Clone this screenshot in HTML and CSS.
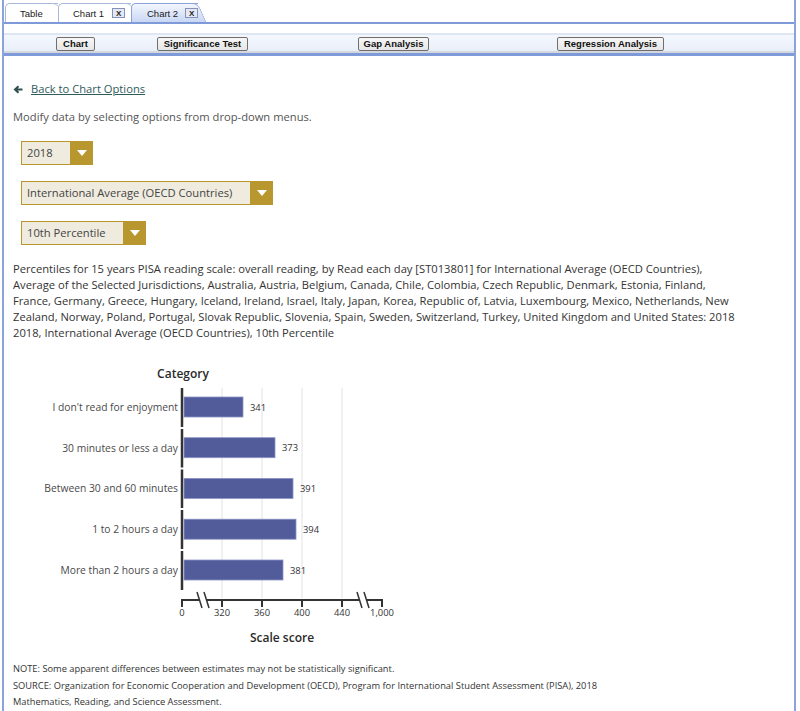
FILE: index.html
```html
<!DOCTYPE html>
<html lang="en">
<head>
<meta charset="utf-8">
<title>Chart 2</title>
<link rel="stylesheet" href="styles.css">
</head>
<body>
<div class="frame">
  <div class="tabs">
    <div class="tab tab-table"><span class="tab-label">Table</span></div>
    <div class="tab tab-c1"><span class="tab-label">Chart 1</span><span class="tab-x">X</span></div>
    <div class="tab tab-c2 active"><span class="tab-label">Chart 2</span><span class="tab-x">X</span></div>
  </div>
  <div class="spacer"></div>
  <div class="toolbar">
    <button class="btn b-chart">Chart</button>
    <button class="btn b-sig">Significance Test</button>
    <button class="btn b-gap">Gap Analysis</button>
    <button class="btn b-reg">Regression Analysis</button>
  </div>
  <div class="content">
    <div class="back">
      <svg class="back-icon" width="10" height="9" viewBox="0 0 10 9"><path d="M9.5 4.5H2.5M5.5 1.2L2 4.5L5.5 7.8" fill="none" stroke="#2f4f4f" stroke-width="2"/></svg>
      <a href="#" class="back-link">Back to Chart Options</a>
    </div>
    <p class="lead">Modify data by selecting options from drop-down menus.</p>
    <div class="dd dd-year"><span class="dd-text">2018</span><span class="dd-arrow"><i class="tri"></i></span></div>
    <div class="dd dd-jur"><span class="dd-text">International Average (OECD Countries)</span><span class="dd-arrow"><i class="tri"></i></span></div>
    <div class="dd dd-pct"><span class="dd-text">10th Percentile</span><span class="dd-arrow"><i class="tri"></i></span></div>
    <p class="desc">Percentiles for 15 years PISA reading scale: overall reading, by Read each day [ST013801] for International Average (OECD Countries), Average of the Selected Jurisdictions, Australia, Austria, Belgium, Canada, Chile, Colombia, Czech Republic, Denmark, Estonia, Finland, France, Germany, Greece, Hungary, Iceland, Ireland, Israel, Italy, Japan, Korea, Republic of, Latvia, Luxembourg, Mexico, Netherlands, New Zealand, Norway, Poland, Portugal, Slovak Republic, Slovenia, Spain, Sweden, Switzerland, Turkey, United Kingdom and United States: 2018 2018, International Average (OECD Countries), 10th Percentile</p>
    <svg class="chart" width="420" height="300" viewBox="13 352 420 300">
      <text x="183" y="377.5" class="c-title" text-anchor="middle">Category</text>
      <g class="grid">
        <line x1="222" y1="388" x2="222" y2="598"/>
        <line x1="262" y1="388" x2="262" y2="598"/>
        <line x1="302" y1="388" x2="302" y2="598"/>
        <line x1="342" y1="388" x2="342" y2="598"/>
      </g>
      <g class="yaxis">
        <line x1="182" y1="388" x2="182" y2="427"/>
        <line x1="182" y1="429" x2="182" y2="467.5"/>
        <line x1="182" y1="469.5" x2="182" y2="508"/>
        <line x1="182" y1="510" x2="182" y2="549"/>
        <line x1="182" y1="551" x2="182" y2="590"/>
      </g>
      <g class="bars">
        <rect x="184" y="397" width="59" height="20"/>
        <rect x="184" y="437.7" width="91" height="20"/>
        <rect x="184" y="478.4" width="109" height="20"/>
        <rect x="184" y="519.2" width="112" height="20"/>
        <rect x="184" y="560" width="99" height="20"/>
      </g>
      <g class="vals">
        <text x="250" y="410.5">341</text>
        <text x="282" y="451.2">373</text>
        <text x="300" y="492">391</text>
        <text x="303" y="532.7">394</text>
        <text x="290" y="573.5">381</text>
      </g>
      <g class="cats" text-anchor="end">
        <text x="178" y="410.8">I don't read for enjoyment</text>
        <text x="178" y="451.5">30 minutes or less a day</text>
        <text x="178" y="492.3">Between 30 and 60 minutes</text>
        <text x="178" y="533">1 to 2 hours a day</text>
        <text x="178" y="573.8">More than 2 hours a day</text>
      </g>
      <path class="xaxis" d="M181 600H199M206 600H359M366 600H383M182 600V607M222 600V607M262 600V607M302 600V607M342 600V607M382 600V607"/>
      <path class="brk" d="M197 592L202 608M204 592L209 608M357 592L362 608M364 592L369 608"/>
      <g class="ticks" text-anchor="middle">
        <text x="182" y="615.5">0</text>
        <text x="222" y="615.5">320</text>
        <text x="262" y="615.5">360</text>
        <text x="302" y="615.5">400</text>
        <text x="342" y="615.5">440</text>
        <text x="382" y="615.5">1,000</text>
      </g>
      <text x="282" y="641.5" class="c-title" text-anchor="middle">Scale score</text>
    </svg>
    <div class="foot">
      <p class="foot-line">NOTE: Some apparent differences between estimates may not be statistically significant.</p>
      <p class="foot-line">SOURCE: Organization for Economic Cooperation and Development (OECD), Program for International Student Assessment (PISA), 2018 Mathematics, Reading, and Science Assessment.</p>
    </div>
  </div>
</div>
</body>
</html>
```
FILE: styles.css
```css
* { box-sizing: border-box; }
html, body { margin: 0; padding: 0; background: #fff; }
body { font-family: "Open Sans", "Liberation Sans", sans-serif; }

.frame {
  margin-left: 2px;
  width: 794px;
  min-height: 711px;
  border-left: 2px solid #8aa3dd;
  border-right: 2px solid #8aa3dd;
}

/* tabs */
.tabs {
  display: flex;
  height: 24px;
  padding: 3px 0 0 1px;
  border-bottom: 2px solid #7e9ad8;
}
.tab {
  position: relative;
  flex-shrink: 0;
  height: 19px;
  display: flex;
  align-items: center;
  padding-left: 14px;
  font: 9.5px "Liberation Sans", Arial, sans-serif;
  color: #1a1a1a;
  white-space: nowrap;
  background: #fff;
  border-top: 1px solid #a9b8d8;
  border-left: 1px solid #a9b8d8;
  border-top-left-radius: 5px;
}
.tab::before {
  content: "";
  position: absolute;
  top: -1px;
  bottom: 0;
  left: calc(100% - 20px);
  width: 19px;
  background: inherit;
  border-top: 1px solid #a9b8d8;
  border-right: 1px solid #a9b8d8;
  border-top-right-radius: 6px;
  transform: skewX(24deg);
  transform-origin: top left;
}
.tab-table { width: 53px; }
.tab-c1 { width: 73px; }
.tab-c2 { width: 67px; padding-left: 15px; }
.tab.active {
  background: linear-gradient(#f3f6fd, #c9d7f4);
  border-color: #8aa3dd;
}
.tab.active::before { border-color: #8aa3dd; }
.tab-label { position: relative; }
.tab-x {
  position: relative;
  flex-shrink: 0;
  margin-left: 8px;
  width: 13px;
  height: 10px;
  border: 1px solid #8593bb;
  background: #e3e8f4;
  font: bold 8px "Liberation Sans", Arial, sans-serif;
  display: flex;
  align-items: center;
  justify-content: center;
  color: #222;
}
.tab-c2 .tab-x { margin-left: 7px; }

/* toolbar */
.spacer { height: 9px; }
.toolbar {
  display: flex;
  align-items: flex-start;
  height: 23px;
  padding-top: 2px;
  border-top: 2px solid #dfe6f3;
  background: linear-gradient(#f4f7fd, #e8eef9);
  border-bottom: 3px solid #7e9ad8;
  box-shadow: inset 0 -2px 0 #d4d7dd;
}
.btn {
  height: 14px;
  padding: 0;
  font: bold 9.5px "Liberation Sans", Arial, sans-serif;
  color: #111;
  background: linear-gradient(#f7f7f7, #e6e6e6);
  border: 1px solid #6f6f6f;
  border-radius: 2px;
  line-height: 12px;
  text-align: center;
}
.b-chart { margin-left: 52px; width: 39px; }
.b-sig { margin-left: 62px; width: 91px; }
.b-gap { margin-left: 110px; width: 71px; }
.b-reg { margin-left: 128px; width: 107px; }

/* content */
.content { padding: 25px 9px 0; }
.back {
  display: flex;
  align-items: center;
  height: 16px;
  font-size: 11.2px;
  line-height: 16px;
}
.back-icon { display: block; margin-right: 8px; }
.back-link { color: #2f5b5b; text-decoration: underline; }
.lead {
  margin: 12px 0 0;
  font-size: 11.2px;
  line-height: 16px;
  color: #555;
}
.dd {
  display: flex;
  height: 24px;
  margin: 16px 0 0 8px;
  border: 1px solid #b8972f;
  background: #efebdf;
}
.dd-year { width: 72px; }
.dd-jur { width: 252px; }
.dd-pct { width: 125px; }
.dd-text {
  flex: 1;
  padding-left: 5px;
  font-size: 11.2px;
  line-height: 22px;
  color: #444;
  white-space: nowrap;
}
.dd-arrow {
  width: 23px;
  margin: -1px -1px -1px 0;
  background: #b8972f;
  display: flex;
  align-items: center;
  justify-content: center;
}
.tri {
  display: block;
  width: 0;
  height: 0;
  border-left: 5px solid transparent;
  border-right: 5px solid transparent;
  border-top: 6px solid #fff;
}
.desc {
  margin: 16px 0 0;
  max-width: 726px;
  font-size: 11.2px;
  line-height: 16px;
  color: #333;
}

/* chart */
.chart { display: block; margin-top: 11px; font-family: "Open Sans", sans-serif; }
.c-title { font-size: 12px; font-weight: 600; fill: #2a2a2a; }
.grid line { stroke: #e2e2e2; stroke-width: 1; }
.yaxis line { stroke: #333; stroke-width: 2.5; }
.bars rect { fill: #525c9b; stroke: #8b93c4; stroke-width: 0.8; }
.vals text { font-size: 9.4px; fill: #333; }
.cats text { font-size: 10.3px; fill: #4a4a4a; }
.xaxis { fill: none; stroke: #333; stroke-width: 2; }
.brk { fill: none; stroke: #333; stroke-width: 1.5; }
.ticks text { font-size: 9.4px; fill: #333; }

/* footer */
.foot {
  margin-top: 9px;
  max-width: 640px;
  font-size: 9.3px;
  line-height: 16.5px;
  color: #333;
}
.foot-line { margin: 0; }
```
